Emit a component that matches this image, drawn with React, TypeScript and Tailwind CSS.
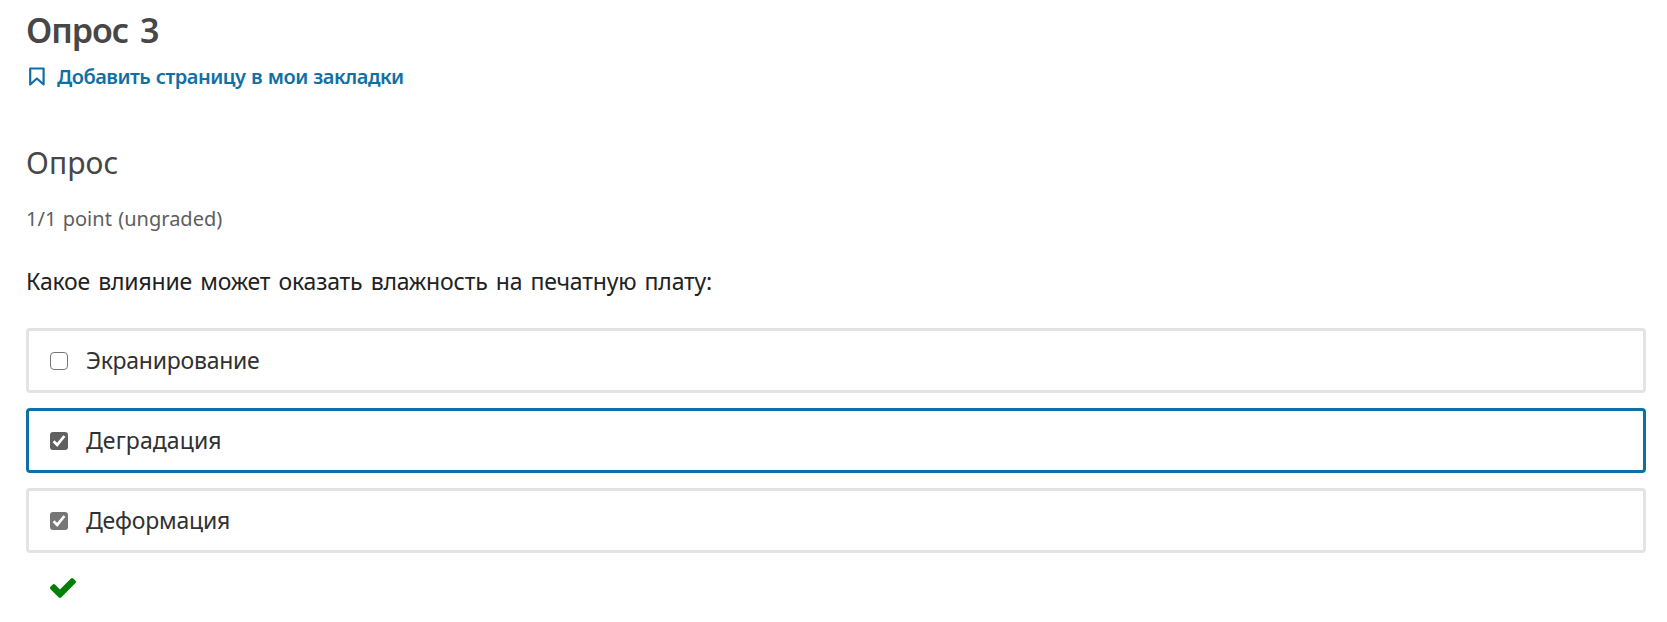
import React from "react";

type Option = { label: string; checked: boolean; active: boolean; labelClass: string };

const options: Option[] = [
  { label: "Экранирование", checked: false, active: false, labelClass: "tracking-[-0.25px]" },
  { label: "Деградация", checked: true, active: true, labelClass: "tracking-[0.1px]" },
  { label: "Деформация", checked: true, active: false, labelClass: "tracking-[-0.2px]" },
];

function Checkbox({ checked, active }: { checked: boolean; active: boolean }) {
  if (!checked) {
    return <span className="size-[18px] shrink-0 rounded-[4px] border border-[#767676] bg-white" />;
  }
  return (
    <span
      className={`flex size-[18px] shrink-0 items-center justify-center rounded-[3px] ${
        active ? "bg-[#606060]" : "bg-[#767676]"
      }`}
    >
      <svg viewBox="0 0 18 18" className="size-[18px]" fill="none" stroke="white" strokeWidth="2.7">
        <path d="M3.6 9.3 L7.2 12.9 L14.4 4" />
      </svg>
    </span>
  );
}

export default function App() {
  return (
    <main className="h-[622px] overflow-hidden bg-white pt-[10px] pr-[21px] pl-[26px] font-['Noto_Sans',sans-serif]">
      <h1 className="text-[34px] leading-10 font-semibold tracking-[-1px] [word-spacing:4px] whitespace-nowrap text-[#474747]">
        Опрос 3
      </h1>
      <a className="mt-[13px] flex h-7 items-center text-[20px] leading-7 font-semibold tracking-[-0.5px] [word-spacing:0.8px] whitespace-nowrap text-[#0f70a5]">
        <svg viewBox="0 0 16 19" className="mr-[12px] mb-[1px] ml-[3px] h-[19px] w-4" fill="none" stroke="currentColor" strokeWidth="2.2" strokeLinejoin="round">
          <path d="M1.2 1.5 H14.6 V17.5 L7.9 11.5 L1.2 17.5 Z" />
        </svg>
        <span>Добавить страницу в мои закладки</span>
      </a>
      <h2 className="mt-[52px] text-[30px] leading-10 tracking-[0.1px] whitespace-nowrap text-[#474747]">Опрос</h2>
      <p className="mt-[22px] text-[20px] leading-7 [word-spacing:1.2px] whitespace-nowrap text-[#5e5e5e]">
        1/1 point (ungraded)
      </p>
      <p className="mt-[30px] text-[23px] leading-9 tracking-[-0.2px] [word-spacing:2.5px] whitespace-nowrap text-[#222222]">
        Какое влияние может оказать влажность на печатную плату:
      </p>
      <div className="mt-[29px] flex flex-col gap-[15px]">
        {options.map((o) => (
          <label
            key={o.label}
            className={`flex h-[65px] items-center rounded-[4px] border-3 pl-[21px] ${
              o.active ? "border-[#0f70a5]" : "border-[#e3e3e3]"
            }`}
          >
            <Checkbox checked={o.checked} active={o.active} />
            <span className={`mb-[2px] ml-[18px] text-[23px] leading-9 whitespace-nowrap text-[#313131] ${o.labelClass}`}>
              {o.label}
            </span>
          </label>
        ))}
      </div>
      <svg viewBox="121 334 1550 1188" className="mt-[25px] ml-6 h-5 w-[26px]" fill="#048004">
        <path d="M1671 566q0 40-28 68l-724 724-136 136q-28 28-68 28t-68-28l-136-136-362-362q-28-28-28-68t28-68l136-136q28-28 68-28t68 28l294 295 656-657q28-28 68-28t68 28l136 136q28 28 28 68z" />
      </svg>
    </main>
  );
}
